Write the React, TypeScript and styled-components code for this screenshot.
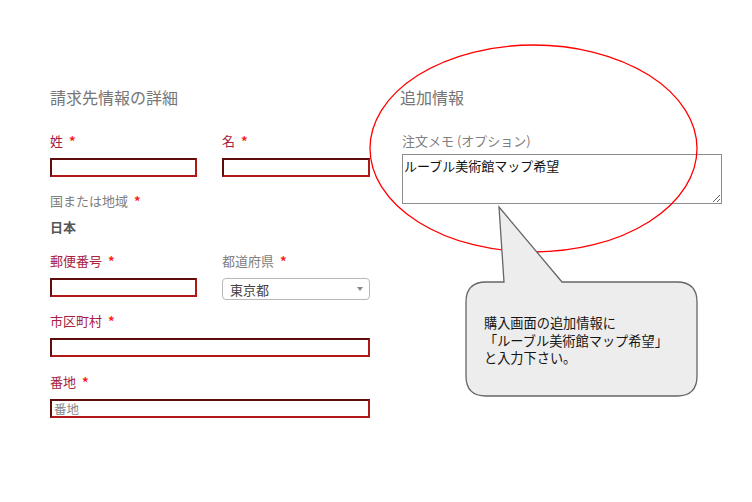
import styled, { createGlobalStyle } from "styled-components";

const GlobalStyle = createGlobalStyle`
  html, body {
    margin: 0;
    padding: 0;
    background: #fff;
  }
  body {
    font-family: "Noto Sans CJK JP", "Noto Sans", sans-serif;
  }
`;

const Page = styled.div`
  position: relative;
  width: 752px;
  height: 502px;
  overflow: hidden;
  display: flex;
  gap: 30px;
  padding: 87px 0 0 50px;
  box-sizing: border-box;
`;

const Column = styled.div`
  width: 320px;
  display: flex;
  flex-direction: column;
`;

const Heading = styled.h3`
  margin: 0 0 25px;
  font-size: 16px;
  line-height: 20px;
  font-weight: 400;
  color: #757575;
`;

const Row = styled.div<{ $mb?: number }>`
  display: grid;
  grid-template-columns: 147px 148px;
  column-gap: 25px;
  align-items: start;
  margin-bottom: ${(p) => p.$mb ?? 15}px;
`;

const Field = styled.div<{ $mb?: number }>`
  display: flex;
  flex-direction: column;
  margin-bottom: ${(p) => p.$mb ?? 0}px;
`;

const Label = styled.label<{ $error?: boolean; $gap?: number }>`
  font-size: 13px;
  line-height: 18px;
  height: 18px;
  margin-bottom: ${(p) => p.$gap ?? 8}px;
  color: ${(p) => (p.$error ? "#a8203f" : "#808080")};
`;

const Req = styled.span`
  color: #ff1a1a;
  margin-left: 6px;
  font-weight: 700;
`;

const Input = styled.input`
  box-sizing: border-box;
  width: 100%;
  height: 19px;
  margin: 0;
  padding: 0 2px;
  border: 2px solid #b01818;
  border-top-color: #5e0c0c;
  border-left-color: #5e0c0c;
  font-family: inherit;
  font-size: 12.5px;
  line-height: 13px;
  color: #333;
  background: #fff;
  outline: none;
  &::placeholder {
    color: #888;
  }
`;

const Value = styled.div`
  font-size: 13px;
  line-height: 18px;
  font-weight: 700;
  color: #555;
`;

const Select = styled.div`
  box-sizing: border-box;
  height: 22px;
  border: 1px solid #b8b8b8;
  border-radius: 4px;
  display: flex;
  align-items: center;
  justify-content: space-between;
  padding: 0 6px 0 7px;
  font-size: 13px;
  color: #444;
`;

const Caret = styled.span`
  width: 0;
  height: 0;
  border-left: 3.5px solid transparent;
  border-right: 3.5px solid transparent;
  border-top: 4px solid #888;
`;

const MemoField = styled.div`
  display: flex;
  flex-direction: column;
  padding-left: 2px;
`;

const TextArea = styled.textarea`
  box-sizing: border-box;
  width: 320px;
  height: 50px;
  margin: 0;
  padding: 2px 1px;
  border: 1px solid #8c8c8c;
  font-family: inherit;
  font-size: 13px;
  line-height: 18px;
  color: #111;
  resize: vertical;
  outline: none;
`;

const Overlay = styled.svg`
  position: absolute;
  left: 0;
  top: 0;
  pointer-events: none;
`;

const CalloutText = styled.div`
  position: absolute;
  left: 484px;
  top: 314px;
  font-size: 13.2px;
  line-height: 17.5px;
  color: #151515;
  white-space: pre;
`;

export default function App() {
  return (
    <>
      <GlobalStyle />
      <Page>
        <Column>
          <Heading>請求先情報の詳細</Heading>
          <Row>
            <Field>
              <Label $error>
                姓<Req>*</Req>
              </Label>
              <Input />
            </Field>
            <Field>
              <Label $error>
                名<Req>*</Req>
              </Label>
              <Input />
            </Field>
          </Row>
          <Field $mb={16}>
            <Label>
              国または地域<Req>*</Req>
            </Label>
            <Value>日本</Value>
          </Field>
          <Row $mb={12}>
            <Field>
              <Label $error>
                郵便番号<Req>*</Req>
              </Label>
              <Input />
            </Field>
            <Field>
              <Label>
                都道府県<Req>*</Req>
              </Label>
              <Select>
                東京都
                <Caret />
              </Select>
            </Field>
          </Row>
          <Field $mb={16}>
            <Label $error>
              市区町村<Req>*</Req>
            </Label>
            <Input />
          </Field>
          <Field>
            <Label $error>
              番地<Req>*</Req>
            </Label>
            <Input placeholder="番地" />
          </Field>
        </Column>
        <Column>
          <Heading>追加情報</Heading>
          <MemoField>
            <Label $gap={4}>注文メモ (オプション)</Label>
            <TextArea defaultValue="ルーブル美術館マップ希望" />
          </MemoField>
        </Column>

        <Overlay width="752" height="502" viewBox="0 0 752 502">
          <ellipse
            cx="533.5"
            cy="148.5"
            rx="163.5"
            ry="103.5"
            fill="none"
            stroke="#ff0000"
            strokeWidth="1.3"
          />
          <path
            d="M486 282 L504 282 L499 207 L562 282 L677 282 Q697 282 697 302 L697 376 Q697 396 677 396 L486 396 Q466 396 466 376 L466 302 Q466 282 486 282 Z"
            fill="#ededed"
            stroke="#666"
            strokeWidth="1.3"
          />
        </Overlay>
        <CalloutText>
          {"購入画面の追加情報に\n「ルーブル美術館マップ希望」\nと入力下さい。"}
        </CalloutText>
      </Page>
    </>
  );
}
